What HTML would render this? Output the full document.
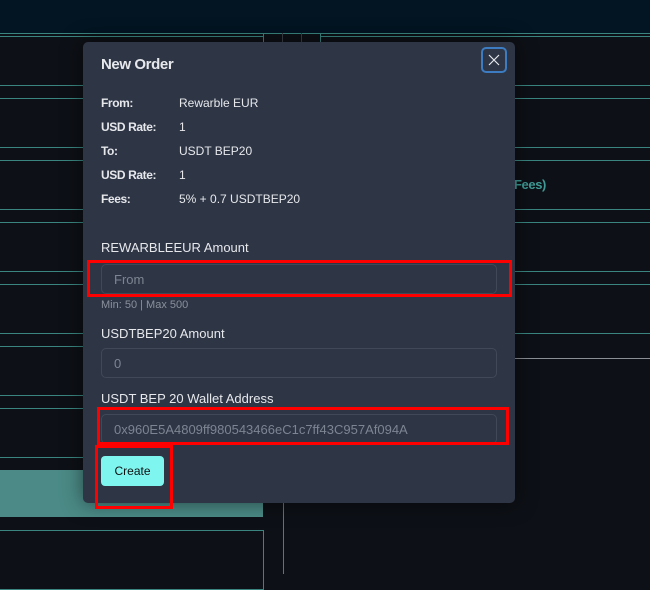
<!DOCTYPE html>
<html><head><style>
*{box-sizing:border-box;margin:0;padding:0}
body{width:650px;height:574px;background:#0d1016;position:relative;overflow:hidden;font-family:"Liberation Sans",sans-serif}
.ab{position:absolute}
.hl{position:absolute;height:1px;background:#3a8580}
.vl{position:absolute;width:1px;background:#3a4048}
.modal{position:absolute;left:83px;top:42px;width:432px;height:461px;background:#2e3545;border-radius:5px;box-shadow:0 0 20px rgba(0,0,0,.5)}
.t{position:absolute;color:#e6e8ec;font-size:12px}
.b{font-weight:bold;letter-spacing:-.4px}
.inp{position:absolute;left:18px;width:396px;height:30px;border:1px solid #414958;border-radius:5px;font-size:13px;color:#7d8593;padding:7px 12px}
.red{position:absolute;border:3px solid #ff0000}
</style></head><body>
<div class="ab" style="left:0;top:0;width:650px;height:33px;background:#031422"></div>
<div class="hl" style="left:0;top:33px;width:650px"></div>
<div class="hl" style="left:0;top:36px;width:263px"></div>
<div class="hl" style="left:320px;top:36px;width:330px"></div>
<div class="vl" style="left:263px;top:33px;height:10px;background:#3a8580"></div>
<div class="vl" style="left:282px;top:33px;height:10px"></div>
<div class="vl" style="left:301px;top:33px;height:10px"></div>
<div class="vl" style="left:320px;top:33px;height:10px;background:#3a8580"></div>
<div class="hl" style="left:0;top:85px;width:650px"></div>
<div class="hl" style="left:0;top:98px;width:650px"></div>
<div class="hl" style="left:0;top:147px;width:650px"></div>
<div class="hl" style="left:0;top:160px;width:650px"></div>
<div class="hl" style="left:0;top:209px;width:650px"></div>
<div class="hl" style="left:0;top:222px;width:650px"></div>
<div class="hl" style="left:0;top:271px;width:650px"></div>
<div class="hl" style="left:0;top:284px;width:650px"></div>
<div class="hl" style="left:0;top:333px;width:650px"></div>
<div class="hl" style="left:0;top:346px;width:83px"></div>
<div class="ab" style="left:515px;top:358px;width:135px;height:1px;background:#8a8f96"></div>
<div class="hl" style="left:0;top:395px;width:83px"></div>
<div class="hl" style="left:0;top:408px;width:83px"></div>
<div class="hl" style="left:0;top:457px;width:83px"></div>
<div class="ab" style="left:0;top:470px;width:263px;height:47px;background:#4b8a86"></div>
<div class="ab" style="left:0;top:530px;width:264px;height:60px;border:1px solid #3a8580;border-left:none"></div>
<div class="vl" style="left:283px;top:503px;height:71px;background:#6a6f76"></div>
<div class="t b" style="left:514px;top:177px;color:#3f9a95;font-size:13px">Fees)</div>
<div class="modal">
<div class="t b" style="left:18px;top:14px;font-size:15px">New Order</div>
<div class="ab" style="left:398px;top:5px;width:26px;height:26px;border:2px solid #3d7cc0;border-radius:5px">
<svg width="22" height="22" viewBox="0 0 22 22" style="position:absolute;left:0;top:0"><path d="M6 6L16 16M16 6L6 16" stroke="#e6e8ec" stroke-width="1.2" fill="none"/></svg></div>
<div class="t b" style="left:18px;top:54px">From:</div><div class="t" style="left:96px;top:54px">Rewarble EUR</div>
<div class="t b" style="left:18px;top:78px">USD Rate:</div><div class="t" style="left:96px;top:78px">1</div>
<div class="t b" style="left:18px;top:102px">To:</div><div class="t" style="left:96px;top:102px">USDT BEP20</div>
<div class="t b" style="left:18px;top:126px">USD Rate:</div><div class="t" style="left:96px;top:126px">1</div>
<div class="t b" style="left:18px;top:150px">Fees:</div><div class="t" style="left:96px;top:150px">5% + 0.7 USDTBEP20</div>
<div class="t" style="left:18px;top:198px;font-size:13px">REWARBLEEUR Amount</div>
<div class="inp" style="top:222px">From</div>
<div class="t" style="left:18px;top:257px;font-size:11px;color:#8a909c">Min: 50 | Max 500</div>
<div class="t" style="left:18px;top:284px;font-size:13px">USDTBEP20 Amount</div>
<div class="inp" style="top:306px">0</div>
<div class="t" style="left:18px;top:349px;font-size:13px">USDT BEP 20 Wallet Address</div>
<div class="inp" style="top:372px">0x960E5A4809ff980543466eC1c7ff43C957Af094A</div>
<div class="ab" style="left:18px;top:414px;width:63px;height:30px;background:#7ff5f0;border-radius:4px;color:#111;font-size:12px;text-align:center;line-height:30px">Create</div>
</div>
<div class="red" style="left:87px;top:260px;width:425px;height:37px"></div>
<div class="red" style="left:97px;top:407px;width:412px;height:38px"></div>
<div class="red" style="left:95px;top:445px;width:78px;height:64px"></div>
</body></html>
